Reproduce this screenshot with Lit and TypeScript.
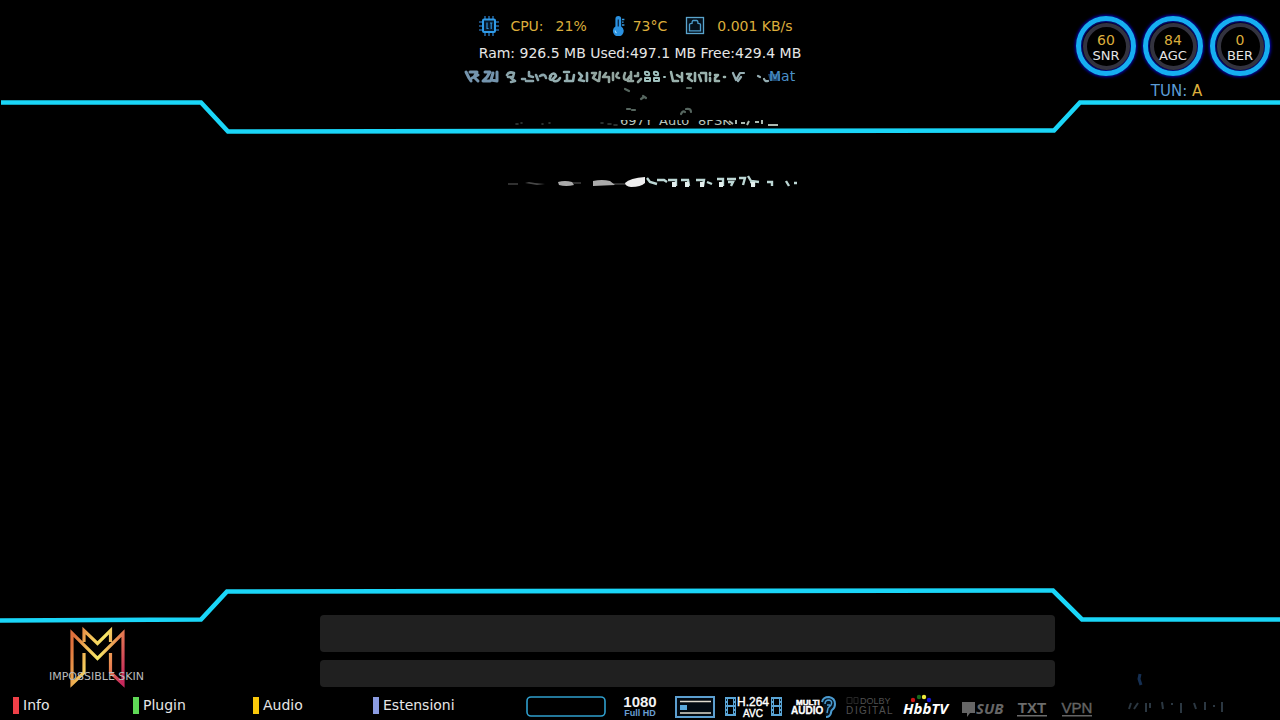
import { LitElement, html, svg, css } from "lit";
import { customElement, property } from "lit/decorators.js";

const FRAME = "#1ad6f8";

@customElement("signal-gauge")
class SignalGauge extends LitElement {
  @property() value = "";
  @property() label = "";

  static styles = css`
    :host { display: block; }
    .ring {
      box-sizing: border-box;
      width: 60px;
      height: 60px;
      border-radius: 50%;
      border: 5px solid #16aef2;
      box-shadow: 0 0 3px 1px #0606c0, inset 0 0 2px 1px #0808b0;
      display: grid;
      place-items: center;
    }
    .core {
      box-sizing: border-box;
      width: 47px;
      height: 47px;
      border-radius: 50%;
      border: 4px solid #33333f;
      padding-top: 3px;
      display: flex;
      flex-direction: column;
      align-items: center;
      justify-content: center;
      white-space: nowrap;
    }
    .value { font-size: 14px; line-height: 15px; color: #dcae3c; }
    .label { font-size: 13px; line-height: 15px; color: #e4e4e4; }
  `;

  render() {
    return html`<div class="ring"><div class="core">
      <span class="value">${this.value}</span><span class="label">${this.label}</span>
    </div></div>`;
  }
}

@customElement("screen-frame")
class ScreenFrame extends LitElement {
  @property() side = "top";

  static styles = css`
    :host { display: block; }
    .line { display: block; width: 100%; height: 36px; overflow: visible; }
  `;

  render() {
    const d = this.side === "top"
      ? "M1 4.5H201L228 33.5L1054 32.5L1080 4.5H1280"
      : "M0 33.5L201 32.5L227 4.5L1053 3.5L1082 32.5H1280";
    return html`<svg class="line" viewBox="0 0 1280 36" preserveAspectRatio="none" aria-hidden="true">
      <path d=${d} fill="none" stroke=${FRAME} stroke-width="4.6" vector-effect="non-scaling-stroke"/>
    </svg>`;
  }
}

const keys = [
  { name: "Info", tone: "red" },
  { name: "Plugin", tone: "green" },
  { name: "Audio", tone: "yellow" },
  { name: "Estensioni", tone: "blue" },
];

const gauges = [
  { value: "60", label: "SNR" },
  { value: "84", label: "AGC" },
  { value: "0", label: "BER" },
];

const cpuIcon = html`<svg class="icon" width="20" height="20" viewBox="0 0 20 20" aria-hidden="true">
  <path d="M6 0v4M10 0v4M14 0v4M6 16v4M10 16v4M14 16v4M0 6h4M0 10h4M0 14h4M16 6h4M16 10h4M16 14h4" stroke="#2464a0" stroke-width="1.6"/>
  <rect x="4" y="3.5" width="12" height="12.5" rx="1" fill="#07182a" stroke="#2f9be8" stroke-width="2"/>
  <path d="M8 6.500v6h1.6M11 7h2.4M12.2 7v6" fill="none" stroke="#2f8fd6" stroke-width="1.2"/>
</svg>`;

const thermoIcon = html`<svg class="icon" width="14" height="20" viewBox="0 0 14 20" aria-hidden="true">
  <path d="M3.400 3a2.900 2.900 0 0 1 5.800 0v7.400a5.400 5.400 0 1 1-5.800 0z" fill="#2a91e0"/>
  <path d="M6.300 3.500v7" fill="none" stroke="#0a2c50" stroke-width="1.4"/>
  <path d="M3.200 14.500a3 3 0 0 0 1.400 2.600" fill="none" stroke="#9ad6ff" stroke-width="1.2"/>
  <path d="M10 3.5h2.4M10 6.2h1.6M10 9h2.4" stroke="#3a9be0" stroke-width="1.3"/>
</svg>`;

const lanIcon = html`<svg class="icon" width="20" height="20" viewBox="0 0 20 20" aria-hidden="true">
  <rect x="1.5" y="1.5" width="17" height="16" fill="#04101a" stroke="#5aa4cc" stroke-width="1.3"/>
  <path d="M4.500 14.800V8.600q0-1 2.500-1.200 0-2.900 1.400-2.900h3.200q1.400 0 1.400 2.900 2.500.2 2.500 1.200v6.200z" fill="none" stroke="#4d9ccb" stroke-width="1.3"/>
</svg>`;

/* Remains of the fading channel information, as short strokes. */
const channelTrace = html`<svg class="trace" width="350" height="62" viewBox="0 0 350 62" aria-label="Channel information">
  <defs><clipPath id="lower"><rect x="0" y="51" width="350" height="11"/></clipPath></defs>
  <g fill="none" stroke-linecap="round" stroke-linejoin="round">
    <path d="M6 3l3 6 2 3M10 3h7l-3 5 4 4M12 9l6-3M25 3h5l-3 5-4 4h7M33 4l-2 7 6 1M37 3v9" stroke="#7494ad" stroke-width="3"/>
    <path d="M47 6q2-4 7-2l-1 4h-5M51 9l4 3-4 1M62 10h3M69 3v4l4 1M66 12h7M76 6l2 5M80 7q5-3 6 2" stroke="#8aa4aa" stroke-width="2.600"/>
    <path d="M90 7q4-5 6 0l-4 4q-4 0-1-4M94 12q4 1 6-3M104 3h5M107 6v6M105 12h7M114 6l-1 6M119 4l3 3-3 4 5 1M127 4v8" stroke="#93aeb0" stroke-width="2.600"/>
    <path d="M132 4h4l-3 5 5 3M140 3l-1 9M146 4l-3 4h6v5M153 4v7M158 4q-4 4 1 5M165 4q-3 7 2 7l3-4M171 3v7M168 12h5M178 4v3h-3M181 10l-3 3" stroke="#91a49e" stroke-width="2.600"/>
    <path d="M185 3q5-1 4 3-5 1-4-3M185 9h5v3h-5zM194 3q5-1 4 3-5 1-4-3M194 9h5v3h-5zM204 8h1" stroke="#9fc0bd" stroke-width="2"/>
    <path d="M211 3l2 9h5M217 6l3 2M222 4v8M227 5h4l-3 4 4 3M235 4v8M239 6l2 6M241 4h5v8M250 4v2M250 9v3M255 6h3l-3 3v3h4M264 8h1" stroke="#9ab2ad" stroke-width="2.600"/>
    <path d="M273 4l3 7 4-7h4M278 12l3-4M298 7l2 1M304 10q1 3 4 2" stroke="#95aeb3" stroke-width="2.200"/>
    <path d="M165 20l4 2M167 40h3M172 41h3M181 30l3-2M183 27l3 2M227 19h4M221 45q2-4 4-2M226 40q5-1 5 3" stroke="#56665f" stroke-width="2.200"/>
    <path d="M56 55h2M61 54h1M82 55h1M89 54h1M141 54h2M148 55h3M154 56h3" stroke="#39423f" stroke-width="1.6"/>
  </g>
  <path d="M308 5h12v7h-10z" fill="#1d4468"/>
  <text x="309" y="12" class="faded-blue">Mat</text>
  <g clip-path="url(#lower)"><text x="160" y="56" class="faded">697Y</text><text x="199" y="56" class="faded">Auto</text><text x="238" y="56" class="faded">8PSK</text></g>
  <path d="M269 52l4 3M276 51v4M281 54h4M289 52l-2 4M295 53h4M302 51v4M308 56h10" stroke="#aab9b0" stroke-width="2"/>
</svg>`;

const titleTrace = html`<svg class="trace" width="300" height="16" viewBox="0 0 300 16" aria-hidden="true">
  <path d="M3 10h10M56 9h20M94 10h26" stroke="#303030" stroke-width="2"/>
  <path d="M20 9l4-1 6 1 10 1-8 1z" fill="#484848"/>
  <path d="M53 8q7-2 14 0l2 3q-8 2-15 0zM88 7q9-2 17 0l5 4-22 1z" fill="#aaa"/>
  <path d="M120 9q5-5 20-6v6q-4 4-14 4-6-1-6-4z" fill="#eee"/>
  <path d="M142 4l3 4 7 2M152 6h7l3 2M163 6h8v6M176 6h7l1 6M191 6h8l-1 6M202 8l5 2M212 5h6v7M223 8h5l-2 4M222 5h9M234 4h6l-2 7M243 2l3 5 8 1M245 8h4v4M262 8h5v4M281 7l3 5M289 9h3" fill="none" stroke="#bcd6d4" stroke-width="2.4"/>
  <path d="M167 8h4v5h-4zM180 8h4v5h-4zM195 8h4v5h-4zM214 8h4v5h-4zM246 8h4v5h-4z" fill="#e4efee"/>
</svg>`;

const logo = html`<svg class="logo" width="98" height="62" viewBox="0 0 98 62" role="img" aria-label="Impossible Skin">
  <defs><linearGradient id="heat" gradientUnits="userSpaceOnUse" x1="22" y1="20" x2="78" y2="38">
    <stop offset="0" stop-color="#e0703c"/><stop offset=".3" stop-color="#f4c65a"/><stop offset=".5" stop-color="#f6e766"/>
    <stop offset=".72" stop-color="#ea8850"/><stop offset="1" stop-color="#c6285c"/>
  </linearGradient></defs>
  <g fill="none" stroke="url(#heat)" stroke-width="3.2">
    <path d="M35 26V45.500L23 57V6L48.500 31.500L74 6V57L61.500 45.500V26"/>
    <path d="M35 15V3.500L48.500 16.500L61.500 3.500V15"/>
  </g>
  <text x="0" y="53" class="brand">IMPOSSIBLE SKIN</text>
</svg>`;

const filmStrip = (x: number) => svg`<g transform="translate(${x} 0)">
  <path d="M0 2h3v19H0zM8 2h3v19H8zM3 2h5v2H3zM3 10h5v2H3zM3 19h5v2H3z" fill="#5aa5d6"/>
  <path d="M1 4h1v2H1zM1 8h1v2H1zM1 12h1v2H1zM1 16h1v2H1zM9 4h1v2H9zM9 8h1v2H9zM9 12h1v2H9zM9 16h1v2H9z" fill="#0a2030"/></g>`;

@customElement("app-root")
class AppRoot extends LitElement {
  static styles = css`
    :host {
      display: flex;
      flex-direction: column;
      min-height: 100vh;
      background: #000;
      color: #e6e6e6;
      font-family: Verdana, "DejaVu Sans", sans-serif;
      font-size: 14px;
      line-height: 20px;
      overflow: hidden;
    }
    .header, .footer { display: grid; grid-template-columns: minmax(0, 1fr); }
    .header > *, .footer > * { grid-area: 1 / 1; }
    .top-frame { align-self: end; }
    .bottom-frame { align-self: start; }
    .top { display: grid; grid-template-columns: 1fr auto 1fr; }
    .system { grid-column: 2; padding-top: 16px; display: flex; flex-direction: column; align-items: center; }
    .stats { display: flex; align-items: center; color: #dcae3c; padding-right: 8px; white-space: nowrap; }
    .icon { display: block; flex: none; }
    .cpu { margin: 0 25px 0 11px; display: flex; gap: 12px; }
    .temp { margin: 0 18px 0 7px; }
    .net { margin-left: 12px; }
    .ram { margin-top: 7px; white-space: nowrap; }
    .trace { display: block; overflow: visible; }
    .system .trace { margin: 6px 10px 3px 0; }
    .faded { font-size: 13px; fill: #b8c6bd; }
    .faded-blue { font-size: 14px; fill: #4a90c8; }
    .signal { justify-self: end; padding: 16px 10px 0 0; }
    .gauges { display: flex; gap: 7px; }
    .tuner { margin-top: 5px; padding-left: 7px; text-align: center; font-size: 15px; color: #dcae3c; }
    .tuner-label { color: #5c9cd6; }
    .view { flex: 1; display: flex; justify-content: center; align-items: flex-start; padding: 40px 0 0 30px; }
    .bottom { padding-top: 28px; }
    .banner { display: grid; grid-template-columns: 1fr 735px 1fr; }
    .logo { margin: 12px 0 0 49px; overflow: visible; }
    .brand { font-size: 11px; fill: #bcbcbc; }
    .panels { display: grid; grid-template-rows: 37px 27px; gap: 8px; margin-left: 47px; margin-right: -47px; }
    .panel { background: #202020; border-radius: 4px; }
    .bar { display: flex; align-items: center; padding-left: 13px; height: 31px; }
    .keys { display: grid; grid-template-columns: repeat(4, 120px); padding-top: 1px; }
    .key {
      display: flex; align-items: center; gap: 4px; padding: 0; border: 0;
      background: none; color: inherit; font: inherit; cursor: pointer;
    }
    .mark { width: 6px; height: 17px; }
    .red { background: #f04048; }
    .green { background: #5fd956; }
    .yellow { background: #fac80a; }
    .blue { background: #8b9ce2; }
    .status { display: flex; align-items: center; margin-left: 33px; padding-top: 4px; }
    .badge { display: block; flex: none; overflow: visible; margin-right: 10px; }
    .wide { margin-right: 17px; }
    .sans { font-family: "Liberation Sans", Arial, sans-serif; font-weight: 700; }
    .t8 { font-size: 8px; }
    .t9 { font-size: 9px; }
    .t10 { font-size: 10px; }
    .t12 { font-size: 12px; }
    .t15 { font-size: 15px; }
    .open { font-family: "Open Sans", sans-serif; font-weight: 700; }
    .slanted { font-style: italic; }
    .plain { font-weight: 400; }
    .clock { margin-left: 24px; margin-top: -31px; }
  `;

  render() {
    return html`
      <header class="header">
        <screen-frame class="top-frame" side="top"></screen-frame>
        <div class="top">
          <div class="system">
            <div class="stats">
              ${cpuIcon}<span class="cpu"><span>CPU:</span><span>21%</span></span>
              ${thermoIcon}<span class="temp">73°C</span>
              ${lanIcon}<span class="net">0.001 KB/s</span>
            </div>
            <div class="ram">Ram: 926.5 MB Used:497.1 MB Free:429.4 MB</div>
            ${channelTrace}
          </div>
          <div class="signal">
            <div class="gauges">
              ${gauges.map((g) => html`<signal-gauge .value=${g.value} .label=${g.label}></signal-gauge>`)}
            </div>
            <div class="tuner"><span class="tuner-label">TUN:</span> A</div>
          </div>
        </div>
      </header>
      <main class="view">${titleTrace}</main>
      <footer class="footer">
        <screen-frame class="bottom-frame" side="bottom"></screen-frame>
        <div class="bottom">
          <div class="banner">
            ${logo}
            <div class="panels"><div class="panel"></div><div class="panel"></div></div>
          </div>
          <div class="bar">
            <nav class="keys">
              ${keys.map((k) => html`<button class="key"><span class="mark ${k.tone}"></span>${k.name}</button>`)}
            </nav>
            ${this.status()}
          </div>
        </div>
      </footer>`;
  }

  private status() {
    return html`<div class="status">
      <svg class="badge wide" width="80" height="24" viewBox="0 0 80 24"><rect x="1" y="2" width="78" height="19" rx="4" fill="none" stroke="#2f9fcd" stroke-width="1.600"/></svg>
      <svg class="badge wide" width="35" height="24" viewBox="0 0 35 24">
        <text x="17" y="12" text-anchor="middle" class="sans t15" fill="#f2f2f2">1080</text>
        <text x="17" y="21" text-anchor="middle" class="sans t9" fill="#6a9ed2">Full HD</text></svg>
      <svg class="badge" width="40" height="24" viewBox="0 0 40 24">
        <rect x="1" y="2" width="38" height="20" fill="#020a12" stroke="#5c9fd0" stroke-width="2"/>
        <path d="M5 6.500h31M5 18h31" stroke="#dedbd0" stroke-width="1.600"/><rect x="5" y="10" width="7" height="5" fill="#5ba9dc"/></svg>
      <svg class="badge" width="57" height="24" viewBox="0 0 57 24">
        ${filmStrip(0)}${filmStrip(46)}
        <text x="28" y="11" text-anchor="middle" class="sans t12 plain" fill="#fff" stroke="#fff" stroke-width=".4">H.264</text>
        <text x="28" y="22" text-anchor="middle" class="sans t10 plain" fill="#fff" stroke="#fff" stroke-width=".4">AVC</text></svg>
      <svg class="badge" width="44" height="24" viewBox="0 0 44 24">
        <path d="M30 7q1-5 7-5 6 1 6 7 0 4-3 6-1 1-1 3-1 4-5 4" fill="#05131f" stroke="#4b9bd0" stroke-width="2"/>
        <path d="M33 9q0-4 4-4 4 1 2 5l-3 3-1 5M35 10h3" fill="none" stroke="#4b9bd0" stroke-width="1.500"/>
        <text x="4" y="10" class="sans t8" fill="#fff" stroke="#fff" stroke-width=".5">MULTI</text>
        <text x="-1" y="19" class="sans t10" fill="#fff" stroke="#fff" stroke-width=".3">AUDIO</text></svg>
      <svg class="badge" width="47" height="24" viewBox="0 0 47 24" fill="#505050">
        <path d="M1 2.500h5v6H1zM8 2.500h4v6H8z" fill="none" stroke="#262626"/>
        <text x="14" y="9" class="sans t9 plain">DOLBY</text>
        <g class="sans t10 plain"><text x="0" y="19">D</text><text x="9" y="19">I</text><text x="13" y="19">G</text><text x="22" y="19">I</text><text x="26" y="19">T</text><text x="33" y="19">A</text><text x="41" y="19">L</text></g></svg>
      <svg class="badge" width="48" height="24" viewBox="0 0 48 24">
        <circle cx="10" cy="5" r="2.200" fill="#c81414"/><circle cx="16" cy="2" r="2.200" fill="#176a1c"/><circle cx="21" cy="2" r="2.200" fill="#f0ea3c"/><circle cx="26" cy="5" r="2.200" fill="#1414d8"/>
        <text x="0" y="19" class="open slanted t15" fill="#fff">HbbTV</text></svg>
      <svg class="badge" width="45" height="24" viewBox="0 0 45 24" fill="#666">
        <path d="M1 7h13v11H9l-3 4v-4H1z"/><text x="15" y="19" class="open slanted t15">SUB</text></svg>
      <svg class="badge" width="34" height="24" viewBox="0 0 34 24" fill="#6c6c6c">
        <text x="16" y="18" text-anchor="middle" class="sans t15">TXT</text><path d="M1 20h30v1.500H1z"/></svg>
      <svg class="badge" width="32" height="24" viewBox="0 0 32 24" fill="#646464">
        <text x="17" y="18" text-anchor="middle" class="sans t15 plain" stroke="#646464" stroke-width=".4">VPN</text><path d="M2 20h30v1.500H2z"/></svg>
      <svg class="clock" width="100" height="44" viewBox="0 0 100 44" aria-hidden="true">
        <path d="M14 5l-1 5 2 6" fill="none" stroke="#152f52" stroke-width="3"/>
        <path d="M3 40l2-6M8 40l4-6M20 34v9M24 34v5M36 33l1 7M46 34v2M55 34v10M68 34l2 6M79 33v8M87 37h2M96 33v10" stroke="#2b3741" stroke-width="2"/>
      </svg>
    </div>`;
  }
}
